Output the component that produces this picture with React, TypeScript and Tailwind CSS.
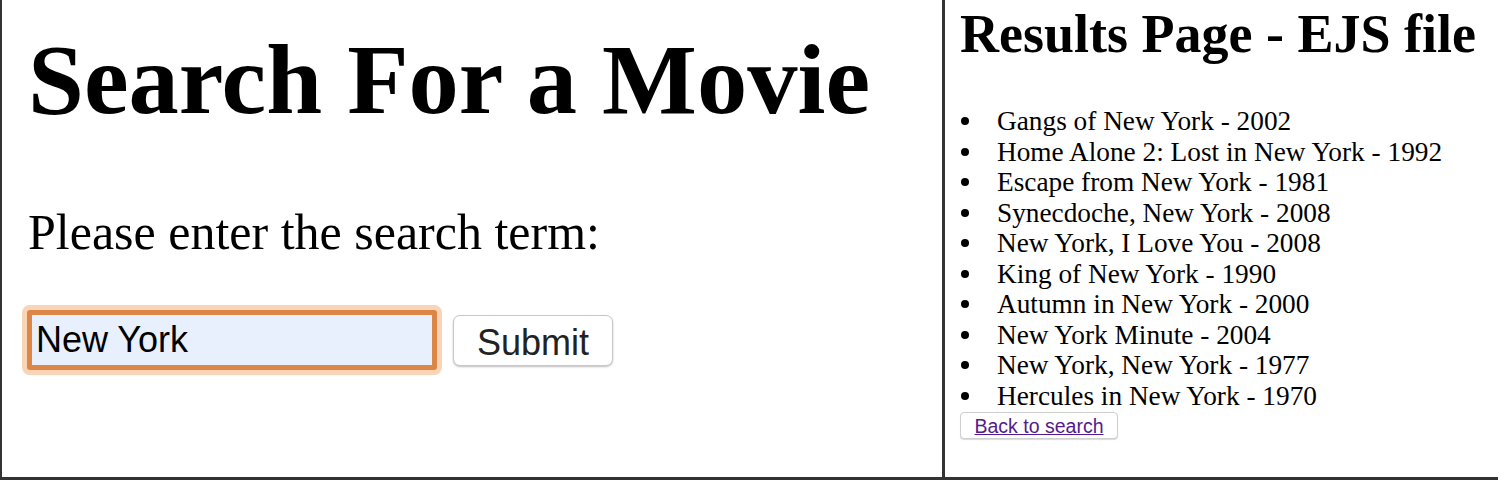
import React from "react";

const movies = [
  "Gangs of New York - 2002",
  "Home Alone 2: Lost in New York - 1992",
  "Escape from New York - 1981",
  "Synecdoche, New York - 2008",
  "New York, I Love You - 2008",
  "King of New York - 1990",
  "Autumn in New York - 2000",
  "New York Minute - 2004",
  "New York, New York - 1977",
  "Hercules in New York - 1970",
];

const serif = "font-['Liberation_Serif','Times_New_Roman',serif]";
const sans = "font-['Liberation_Sans',Arial,sans-serif]";

function SearchPanel() {
  return (
    <div className={`w-[943px] shrink-0 border-r-[3px] border-[#333] pl-[26px] text-black ${serif}`}>
      <h1 className="mt-[21px] text-[100.5px] font-bold leading-[116px]">Search For a Movie</h1>
      <p className="mt-[66px] text-[50px] leading-[58px]">Please enter the search term:</p>
      <form className="-ml-[1px] mt-[49px] flex items-center gap-[16px]" onSubmit={(e) => e.preventDefault()}>
        <input
          type="text"
          defaultValue="New York"
          className={`h-[60px] w-[410px] rounded-[3px] border-[5px] border-[#dc8647] bg-[#e8f0fe] px-[4px] text-[36px] text-black shadow-[0_0_0_5px_rgba(242,160,95,0.45)] outline-none ${sans}`}
        />
        <button
          type="submit"
          className={`h-[51px] w-[160px] rounded-[7px] border border-[#c8c8c8] bg-white text-[36px] text-[#222] shadow-[0_1px_2px_rgba(0,0,0,0.25)] ${sans}`}
        >
          Submit
        </button>
      </form>
    </div>
  );
}

function ResultsPanel() {
  return (
    <div className={`flex-1 pl-[15px] text-black ${serif}`}>
      <h1 className="mt-[3px] text-[54px] font-bold leading-[62px]">Results Page - EJS file</h1>
      <ul className="mt-[41px] text-[27.3px] leading-[30.5px]">
        {movies.map((m) => (
          <li key={m} className="flex items-center">
            <span className="ml-[1px] mr-[28px] h-[8px] w-[8px] shrink-0 rounded-full bg-black" />
            <span>{m}</span>
          </li>
        ))}
      </ul>
      <button
        type="button"
        className={`mt-[1px] h-[27px] w-[158px] rounded-[4px] border border-[#cfcfcf] bg-white text-[19.5px] leading-[24px] shadow-[0_1px_1px_rgba(0,0,0,0.15)] ${sans}`}
      >
        <a href="#" className="text-[#551a8b] underline">
          Back to search
        </a>
      </button>
    </div>
  );
}

export default function App() {
  return (
    <div className="flex h-[480px] w-[1498px] overflow-hidden border-b-[3px] border-l-2 border-[#333] bg-white">
      <SearchPanel />
      <ResultsPanel />
    </div>
  );
}
